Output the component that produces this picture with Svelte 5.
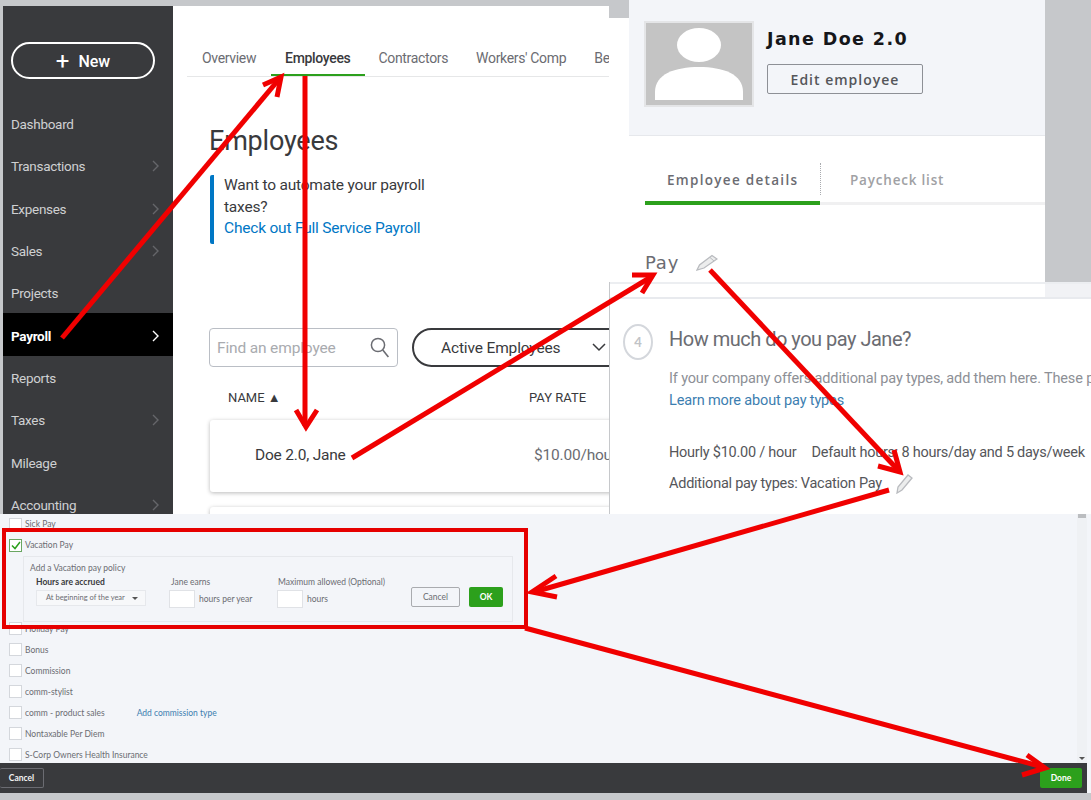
<script>
  const nav = [
    { label: 'Dashboard' },
    { label: 'Transactions', more: true },
    { label: 'Expenses', more: true },
    { label: 'Sales', more: true },
    { label: 'Projects' },
    { label: 'Payroll', more: true, active: true },
    { label: 'Reports' },
    { label: 'Taxes', more: true },
    { label: 'Mileage' },
    { label: 'Accounting', more: true }
  ];
  const tabs = ['Overview', 'Employees', 'Contractors', "Workers' Comp", 'Be'];
  const lowerPay = ['Bonus', 'Commission', 'comm-stylist', 'comm - product sales', 'Nontaxable Per Diem', 'S-Corp Owners Health Insurance'];
  const arrows = [
    { line: 'M62 338L280 78', head: 'M263 85L281 77L277 97' },
    { line: 'M305 76V426', head: 'M296 410L306 427L317 410' },
    { line: 'M352 458L651 277', head: 'M632 275L653 275L642 293' },
    { line: 'M710 270L899 471', head: 'M878 466L900 472L894 450' },
    { line: 'M889 490L534 592', head: 'M556 576L532 592L557 597' },
    { line: 'M525 628L1043 767', head: 'M1027 755L1045 768L1022 775' }
  ];
</script>

<div class="stage">
  <div class="gutter"></div>
  <section class="panel qbo">
    <aside class="side">
      <button class="new"><span class="plus">+</span> New</button>
      <nav>
        {#each nav as item}
          <div class="nav-item" class:active={item.active}>
            <span>{item.label}</span>
            {#if item.more}
              <svg class="chev" width="7" height="12" viewBox="0 0 7 12"><path d="M1 1l5 5-5 5" fill="none" stroke="currentColor" stroke-width="1.4" /></svg>
            {/if}
          </div>
        {/each}
      </nav>
    </aside>
    <main class="content">
      <div class="tabs">
        {#each tabs as tab, i}
          <div class="tab" class:on={i === 1}>{tab}</div>
        {/each}
      </div>
      <h1>Employees</h1>
      <div class="promo">
        <p>Want to automate your payroll<br />taxes?</p>
        <a href="#promo">Check out Full Service Payroll</a>
      </div>
      <div class="filters">
        <div class="find">
          <span>Find an employee</span>
          <svg width="20" height="21" viewBox="0 0 20 21"><circle cx="8" cy="8" r="6.6" fill="none" stroke="#6b6c72" stroke-width="1.5" /><path d="M12.8 13l5.6 7" stroke="#6b6c72" stroke-width="1.6" /></svg>
        </div>
        <div class="select">
          <span>Active Employees</span>
          <svg width="14" height="9" viewBox="0 0 14 9"><path d="M1 1l6 6 6-6" fill="none" stroke="#393a3d" stroke-width="1.5" /></svg>
        </div>
      </div>
      <div class="heads"><span>NAME ▲</span><span>PAY RATE</span></div>
      <div class="row-card"><span class="who-name">Doe 2.0, Jane</span><span class="rate">$10.00/hour</span></div>
      <div class="row-card next"></div>
    </main>
  </section>

  <section class="panel profile">
    <header class="hero">
      <svg class="avatar" width="106" height="82" viewBox="0 0 106 82">
        <rect width="106" height="82" fill="#c4c4c4" />
        <ellipse cx="53" cy="22" rx="22" ry="17" fill="#fff" />
        <path d="M9 77v-8c0-18 20-25 44-25s44 7 44 25v8z" fill="#fff" />
      </svg>
      <div class="who">
        <h2>Jane Doe 2.0</h2>
        <button class="edit">Edit employee</button>
      </div>
    </header>
    <div class="ptabs">
      <div class="ptab on">Employee details</div>
      <div class="pdiv"></div>
      <div class="ptab">Paycheck list</div>
    </div>
    <div class="pay">
      <span>Pay</span>
      <svg width="22" height="17" viewBox="0 0 22 17"><path d="M1 16l2.500-5L16 1.500l5 3.500L8 14z" fill="#eceded" stroke="#b9bbbf" stroke-width="1.300" /><path d="M14 3.500l4 3.500" stroke="#b9bbbf" /></svg>
    </div>
  </section>

  <section class="panel howmuch">
    <div class="strip"></div>
    <div class="step-wrap">
      <div class="step">4</div>
      <div class="step-body">
        <h3>How much do you pay Jane?</h3>
        <p class="help">If your company offers additional pay types, add them here. These pay types will appear</p>
        <a href="#learn">Learn more about pay types</a>
        <p class="line first"><span>Hourly $10.00 / hour</span><span>Default hours: 8 hours/day and 5 days/week</span></p>
        <p class="line">
          Additional pay types: Vacation Pay
          <svg width="18" height="21" viewBox="0 0 18 21"><path d="M2 20l1-6L13 2l4 3L7 17z" fill="#eceded" stroke="#b9bbbf" stroke-width="1.300" /></svg>
        </p>
      </div>
    </div>
  </section>

  <section class="panel paytypes">
    <div class="list">
      <label class="check clipped"><i></i>Sick Pay</label>
      <label class="check vac">
        <i class="ticked"><svg width="10" height="9" viewBox="0 0 10 9"><path d="M1 4.500l3 3 5-6.500" fill="none" stroke="#2ca01c" stroke-width="1.500" /></svg></i>
        Vacation Pay
      </label>
      <div class="policy">
        <div class="policy-title">Add a Vacation pay policy</div>
        <div class="fields">
          <div class="field accr">
            <b>Hours are accrued</b>
            <div class="dd"><span>At beginning of the year</span><em></em></div>
          </div>
          <div class="field earns">
            <span>Jane earns</span>
            <div class="inline"><i class="box"></i>hours per year</div>
          </div>
          <div class="field maxi">
            <span>Maximum allowed (Optional)</span>
            <div class="inline"><i class="box"></i>hours</div>
          </div>
          <button class="cancel">Cancel</button>
          <button class="ok">OK</button>
        </div>
      </div>
      <label class="check holiday"><i></i>Holiday Pay</label>
      {#each lowerPay as name}
        <label class="check">
          <i></i>{name}
          {#if name === 'comm - product sales'}<a href="#add">Add commission type</a>{/if}
        </label>
      {/each}
    </div>
    <div class="scroll"><span class="thumb"></span><em class="down"></em></div>
    <footer class="bar">
      <button class="b-cancel">Cancel</button>
      <button class="b-done">Done</button>
    </footer>
  </section>

  <svg class="marks" width="1091" height="800" viewBox="0 0 1091 800">
    <rect x="4" y="530" width="522" height="97" fill="none" stroke="#e60000" stroke-width="4" />
    {#each arrows as a}
      <path d={a.line} fill="none" stroke="#f00000" stroke-width="5" />
      <path d={a.head} fill="none" stroke="#f00000" stroke-width="5" />
    {/each}
  </svg>
</div>

<style>
  :global(body) { margin: 0; background: #c9ccd0; }
  .stage {
    position: relative; width: 1091px; height: 800px; overflow: hidden;
    background: #c6c8cb; font-family: Roboto, "Open Sans", sans-serif; color: #393a3d;
  }
  .panel { position: absolute; box-sizing: border-box; overflow: hidden; }
  .gutter { position: absolute; left: 609px; top: 18px; width: 20px; height: 264px; background: #fff; }
  .marks { position: absolute; inset: 0; pointer-events: none; }
  a { color: #0077c5; text-decoration: none; }
  button { font-family: inherit; padding: 0; cursor: pointer; }

  .qbo { left: 3px; top: 6px; width: 606px; height: 508px; display: flex; background: #fff; }
  .side { width: 170px; flex: none; background: #393a3d; color: #cfd0d2; }
  .new {
    display: block; width: 144px; height: 37px; margin: 36px 0 0 8px;
    border: 2px solid #fff; border-radius: 19px; background: transparent;
    color: #fff; font-size: 16px; font-weight: 500;
  }
  .plus { font-size: 24px; font-weight: 400; line-height: 20px; vertical-align: -2px; margin-right: 5px; }
  nav { margin-top: 23px; }
  .nav-item {
    height: 42.3px; box-sizing: border-box; display: flex; align-items: center; justify-content: space-between;
    padding: 2px 14px 0 8px; font-size: 13.500px; letter-spacing: -.3px;
  }
  .nav-item .chev { color: #65666a; }
  .nav-item.active { background: #000; color: #fff; font-weight: 700; }
  .nav-item.active .chev { color: #fff; stroke-width: 2; }

  .content { flex: 1; min-width: 0; padding-left: 14px; }
  .tabs {
    display: flex; height: 35px; margin-top: 36px; box-sizing: border-box;
    border-bottom: 1px solid #e6e7e8; white-space: nowrap; overflow: hidden;
  }
  .tab { padding: 0 14px 0 15px; font-size: 14px; letter-spacing: -.33px; line-height: 32px; color: #6b6c72; flex: none; }
  .tab.on { color: #393a3d; font-weight: 500; padding: 0 14px; border-bottom: 3px solid #2ca01c; box-sizing: border-box; height: 35px; margin-left: 1px; }
  .tab.on + .tab { padding-left: 14px; }
  .tab.on + .tab + .tab { padding-left: 14px; }
  .tab.on + .tab + .tab + .tab { padding-left: 14px; }
  h1 { margin: 46px 0 0 22px; font-size: 27px; letter-spacing: -.2px; font-weight: 400; line-height: 36px; }
  .promo {
    margin: 16px 0 0 23px; padding-left: 10px; height: 69px; box-sizing: border-box;
    border-left: 4px solid #0077c5; border-radius: 2px; font-size: 15.500px; letter-spacing: -.2px; line-height: 21.500px;
  }
  .promo p { margin: 0; }
  .filters { display: flex; gap: 14px; margin: 84px 0 0 22px; width: 700px; font-size: 15.500px; letter-spacing: -.15px; }
  .find {
    width: 189px; height: 39px; flex: none; box-sizing: border-box; border: 1px solid #babec5; border-radius: 4px;
    display: flex; align-items: center; justify-content: space-between; padding: 0 7px 0 7px;
    color: #a9abaf;
  }
  .select {
    width: 240px; height: 39px; flex: none; box-sizing: border-box; border: 2px solid #393a3d; border-radius: 20px;
    display: flex; align-items: center; gap: 32px; padding-left: 27px;
  }
  .heads { display: flex; margin: 21px 0 0 41px; font-size: 13px; line-height: 20px; }
  .heads span:first-child { width: 301px; }
  .row-card {
    margin: 12px 0 0 23px; height: 72px; width: 500px; display: flex; align-items: center; box-sizing: border-box;
    padding: 0 0 2px 45px; background: #fff; border-radius: 3px; box-shadow: 0 1px 4px rgba(0, 0, 0, .28); font-size: 15.500px; letter-spacing: -.2px;
  }
  .who-name { width: 279px; flex: none; }
  .rate { color: #6b6c72; }
  .row-card.next { margin-top: 15px; }

  .profile { left: 629px; top: 0; width: 416px; height: 282px; background: #fff; font-family: "DejaVu Sans", sans-serif; }
  .hero { height: 136px; box-sizing: border-box; padding: 23px 0 0 17px; display: flex; gap: 15px; background: #f3f5f9; border-bottom: 1px solid #e6e8ec; }
  .avatar { outline: 2px solid #e4e5e7; }
  .who h2 { margin: 4px 0 0; font: 700 17.500px/24px "DejaVu Sans", sans-serif; color: #15161a; letter-spacing: 1.400px; white-space: nowrap; }
  .edit { display: block; width: 156px; height: 30px; margin-top: 13px; border: 1px solid #8d9096; border-radius: 2px; background: transparent; color: #55565a; font: 600 14px "Open Sans", sans-serif; letter-spacing: 1px; }
  .ptabs { display: flex; margin: 26px 0 0 16px; height: 43px; box-sizing: border-box; border-bottom: 3px solid #f0f0f1; }
  .ptab { font: 600 13.500px/36px "Open Sans", sans-serif; letter-spacing: .8px; color: #a0a1a4; padding-left: 29px; }
  .ptab.on { width: 175px; box-sizing: border-box; height: 43px; padding-left: 22px; letter-spacing: 1.300px; color: #6b6c72; border-bottom: 4px solid #2ca01c; }
  .pdiv { height: 32px; margin-top: 1px; border-left: 1px dotted #a9abaf; }
  .pay { display: flex; align-items: center; gap: 17px; margin: 45px 0 0 16px; font-size: 18px; letter-spacing: .8px; color: #6b6c72; height: 24px; }

  .howmuch { left: 610px; top: 282px; width: 481px; height: 232px; background: #fff; }
  .strip { height: 13px; border-top: 2px solid #eceef1; border-bottom: 2px solid #e8eaee; background: linear-gradient(to right, #fff 435px, #f1f2f5 435px); }
  .step-wrap { display: flex; padding: 25px 0 0 13px; }
  .step { width: 30px; height: 36px; flex: none; box-sizing: border-box; border: 2px solid #d4d7dc; border-radius: 50%; text-align: center; font: 700 13px/32px Lato, sans-serif; color: #c1c3c7; }
  .step-body { margin: 2px 0 0 16px; white-space: nowrap; }
  h3 { margin: 0; font-size: 20px; letter-spacing: -.5px; font-weight: 400; line-height: 26px; color: #6b6c72; }
  .help { margin: 16px 0 0; font-size: 14.500px; letter-spacing: -.15px; line-height: 22px; color: #8d9096; }
  .step-body a { display: block; font-size: 14.500px; letter-spacing: -.15px; line-height: 22px; color: #3c7eb0; }
  .line { margin: 0; display: flex; align-items: center; gap: 15px; font-size: 14.500px; letter-spacing: -.25px; line-height: 31px; color: #55565a; }
  .line.first { margin-top: 25px; }
  .line svg { margin-left: -2px; }

  .paytypes { left: 0; top: 514px; width: 1091px; height: 279px; background: #f3f5f9; }
  .list { padding: 1px 0 0 9px; color: #6b6c72; font-size: 8.500px; font-family: Lato, sans-serif; }
  .check { display: flex; align-items: center; gap: 3px; height: 21px; }
  .check i { width: 11px; height: 11px; flex: none; background: #fff; border: 1px solid #d4d7dc; display: flex; align-items: center; justify-content: center; }
  .check a { margin-left: 29px; color: #3c7eb0; }
  .check.clipped { height: 18px; }
  .vac { margin-top: 1px; height: 22px; }
  .check .ticked { border-color: #6aa662; }
  .policy { margin: 0 0 0 14px; width: 490px; height: 66px; box-sizing: border-box; border: 1px solid #e6e8ec; padding: 4px 0 0 6px; background: #f3f5f9; }
  .policy-title { line-height: 15px; }
  .fields { display: flex; align-items: flex-start; }
  .field { display: flex; flex-direction: column; line-height: 12px; flex: none; }
  .field b { color: #393a3d; }
  .field > span { padding-left: 2px; }
  .accr { margin-left: 6px; width: 136px; }
  .earns { width: 108px; margin-left: -3px; }
  .maxi { width: 134px; }
  .maxi > span { padding-left: 1px; }
  .dd { width: 110px; height: 16px; margin-top: 2px; display: flex; align-items: center; justify-content: space-between; box-sizing: border-box; padding: 0 7px 0 9px; background: #f7f8fa; border: 1px solid #e6e8ec; font-size: 7.500px; }
  .dd em, .scroll em { display: block; width: 0; height: 0; border: 3px solid transparent; border-top-color: #555; border-bottom-width: 0; }
  .inline { display: flex; align-items: center; gap: 4px; margin-top: 2px; }
  .box { display: block; width: 24px; height: 16px; background: #fff; border: 1px solid #e0e2e6; }
  .cancel { width: 49px; height: 20px; margin-top: 11px; background: #f3f5f9; border: 1px solid #a9abaf; border-radius: 2px; color: #6b6c72; font-size: 8.500px; }
  .ok { width: 34px; height: 20px; margin: 11px 0 0 9px; background: #2ca01c; border: none; border-radius: 2px; color: #fff; font-size: 8.500px; font-weight: 700; }
  .holiday { margin-top: -4px; }
  .scroll { position: absolute; right: 4px; top: 0; width: 10px; height: 249px; background: #eff1f4; }
  .thumb { position: absolute; left: 1px; top: 0; width: 8px; height: 4px; background: #bbbdc0; }
  .scroll .down { position: absolute; bottom: 3px; left: 2px; }
  .bar { position: absolute; left: 0; right: 4px; bottom: 0; height: 30px; background: #393a3d; display: flex; align-items: center; justify-content: space-between; padding: 0 5px 0 0; }
  .b-cancel { width: 44px; height: 20px; background: transparent; border: 1px solid #6b6c72; border-left: 0; border-radius: 2px; color: #f2f2f2; font-size: 8.500px; font-weight: 700; font-family: Lato, sans-serif; }
  .b-done { width: 42px; height: 20px; background: #2ca01c; border: none; border-radius: 2px; color: #fff; font-size: 8.500px; font-weight: 700; font-family: Lato, sans-serif; }
</style>
